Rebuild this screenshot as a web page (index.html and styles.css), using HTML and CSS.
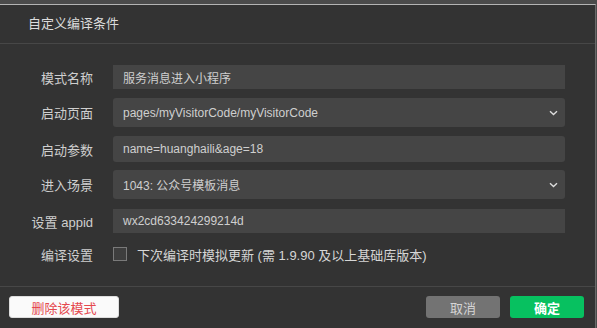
FILE: index.html
```html
<html>
<head>
    <meta charset="utf-8">
    <link rel="stylesheet" href="styles.css">
</head>
<body>

<div class="dialog">
    <div class="head">自定义编译条件</div>

    <div class="form">
        <div class="row r1">
            <label>模式名称</label>
            <div class="field square">服务消息进入小程序</div>
        </div>
        <div class="row r2">
            <label>启动页面</label>
            <div class="field select">pages/myVisitorCode/myVisitorCode
                <svg class="arrow" width="9" height="6" viewBox="0 0 9 6"><path d="M1 1.2 L4.5 4.5 L8 1.2" fill="none" stroke="#ddd" stroke-width="1.4"/></svg>
            </div>
        </div>
        <div class="row r3">
            <label>启动参数</label>
            <div class="field">name=huanghaili&amp;age=18</div>
        </div>
        <div class="row r4">
            <label>进入场景</label>
            <div class="field select">1043: 公众号模板消息
                <svg class="arrow" width="9" height="6" viewBox="0 0 9 6"><path d="M1 1.2 L4.5 4.5 L8 1.2" fill="none" stroke="#ddd" stroke-width="1.4"/></svg>
            </div>
        </div>
        <div class="row r5">
            <label>设置 appid</label>
            <div class="field square">wx2cd633424299214d</div>
        </div>
        <div class="row r6">
            <label>编译设置</label>
            <span class="check"></span>
            <span class="check-text">下次编译时模拟更新 (需 1.9.90 及以上基础库版本)</span>
        </div>
    </div>

    <div class="foot">
        <button class="btn del">删除该模式</button>
        <div class="right">
            <button class="btn cancel">取消</button>
            <button class="btn ok">确定</button>
        </div>
    </div>
</div>

</body>
</html>
```

FILE: styles.css
```css
body { margin: 0; background: #4b4b4b; font-family: "Liberation Sans", "Noto Sans CJK SC", sans-serif; }
.dialog { margin-top: 4px; width: 596px; height: 324px; background: #333; border-top: 1px solid #b4b4b4; border-right: 1px solid #6a6a6a; box-sizing: border-box; }
.head { height: 38px; line-height: 38px; padding-left: 28px; font-size: 13px; color: #dcdcdc; border-bottom: 1px solid #474747; }
.form { padding-top: 21px; height: 243px; box-sizing: border-box; border-bottom: 1px solid #474747; }
.row { display: flex; align-items: center; margin-right: 30px; }
.row label { width: 93px; text-align: right; font-size: 13px; color: #cfcfcf; flex-shrink: 0; }
.field { position: relative; margin-left: 20px; flex: 1; height: 100%; display: flex; align-items: center; padding-left: 10px; background: #454545; color: #cfcfcf; font-size: 12px; border-radius: 3px; }
.field.square { border-radius: 0; }
.arrow { position: absolute; right: 7px; top: 50%; margin-top: -3px; }
.r1 { height: 24px; }
.r2 { height: 29px; margin-top: 9px; }
.r3 { height: 26px; margin-top: 9px; }
.r4 { height: 29px; margin-top: 8px; }
.r5 { height: 24px; margin-top: 10px; }
.r6 { height: 16px; margin-top: 13px; }
.check { margin-left: 20px; width: 12px; height: 12px; border: 1px solid #7a7a7a; background: #3e3e3e; }
.check-text { margin-left: 10px; font-size: 13px; color: #d6d6d6; }
.foot { display: flex; justify-content: space-between; padding: 9px 11px 0 9px; }
.right { display: flex; gap: 10px; }
.btn { height: 22px; border: 0; border-radius: 3px; font-family: inherit; font-size: 13px; padding: 0; }
.del { width: 110px; background: #fafafa; color: #e5484d; border: 1px solid #ddd; }
.cancel { width: 74px; background: #737373; color: #d5d5d5; }
.ok { width: 74px; background: #07c160; color: #fff; font-weight: bold; }
```
